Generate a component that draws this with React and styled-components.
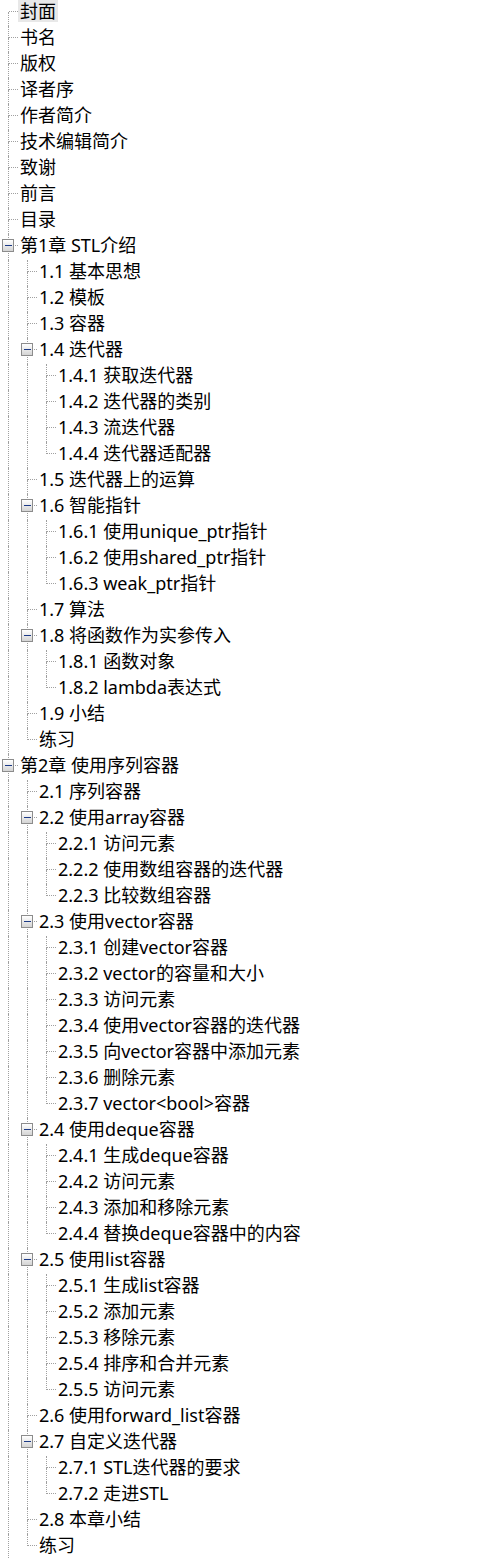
import React from 'react';
import styled, { createGlobalStyle } from 'styled-components';

const GlobalStyle = createGlobalStyle`
  html, body {
    margin: 0;
    padding: 0;
    background: #ffffff;
  }
  body {
    font-family: "Noto Sans", "Noto Sans CJK SC", sans-serif;
    color: #000000;
  }
`;

const LINE = '1px dotted #a0a0a0';

const Tree = styled.div`
  display: flex;
  flex-direction: column;
`;

const Row = styled.div`
  display: flex;
  align-items: flex-start;
  height: 26px;
`;

// vertical line of an ancestor level that still has siblings below
const Guide = styled.div`
  flex: none;
  width: 9px;
  height: 26px;
  margin-right: 10px;
  box-sizing: border-box;
  border-right: ${p => (p.$on ? LINE : 'none')};
`;

const Connector = styled.div`
  flex: none;
  width: 18px;
  height: 26px;
  display: grid;
  grid-template-columns: 2px 7px 5px 4px;
  grid-template-rows: 5px 7px 6px 8px;
`;

const StemTop = styled.div`
  grid-column: 1 / 3;
  grid-row: 1 / 3;
  border-right: ${p => (p.$on ? LINE : 'none')};
`;

const StemBottom = styled.div`
  grid-column: 1 / 3;
  grid-row: 3 / 5;
  border-right: ${p => (p.$on ? LINE : 'none')};
`;

const Branch = styled.div`
  grid-column: 3 / 5;
  grid-row: 1 / 3;
  border-bottom: ${LINE};
`;

const Toggle = styled.div`
  grid-column: 2 / 4;
  grid-row: 2 / 4;
  box-sizing: border-box;
  border: 1px solid #8c8c8c;
  background: linear-gradient(#ffffff, #d4d4d4);
  display: flex;
  align-items: center;
  justify-content: center;

  &::after {
    content: '';
    width: 7px;
    height: 1px;
    background: #1c3a86;
  }
`;

const Label = styled.div`
  height: 22px;
  line-height: 22px;
  padding: 0 2px;
  font-size: 18px;
  white-space: nowrap;
  background: ${p => (p.$selected ? '#e8e8e8' : 'transparent')};
`;

const toc = [
  { t: '封面', sel: true },
  { t: '书名' },
  { t: '版权' },
  { t: '译者序' },
  { t: '作者简介' },
  { t: '技术编辑简介' },
  { t: '致谢' },
  { t: '前言' },
  { t: '目录' },
  {
    t: '第1章 STL介绍',
    c: [
      { t: '1.1 基本思想' },
      { t: '1.2 模板' },
      { t: '1.3 容器' },
      {
        t: '1.4 迭代器',
        c: [
          { t: '1.4.1 获取迭代器' },
          { t: '1.4.2 迭代器的类别' },
          { t: '1.4.3 流迭代器' },
          { t: '1.4.4 迭代器适配器' },
        ],
      },
      { t: '1.5 迭代器上的运算' },
      {
        t: '1.6 智能指针',
        c: [
          { t: '1.6.1 使用unique_ptr指针' },
          { t: '1.6.2 使用shared_ptr指针' },
          { t: '1.6.3 weak_ptr指针' },
        ],
      },
      { t: '1.7 算法' },
      {
        t: '1.8 将函数作为实参传入',
        c: [{ t: '1.8.1 函数对象' }, { t: '1.8.2 lambda表达式' }],
      },
      { t: '1.9 小结' },
      { t: '练习' },
    ],
  },
  {
    t: '第2章 使用序列容器',
    c: [
      { t: '2.1 序列容器' },
      {
        t: '2.2 使用array容器',
        c: [
          { t: '2.2.1 访问元素' },
          { t: '2.2.2 使用数组容器的迭代器' },
          { t: '2.2.3 比较数组容器' },
        ],
      },
      {
        t: '2.3 使用vector容器',
        c: [
          { t: '2.3.1 创建vector容器' },
          { t: '2.3.2 vector的容量和大小' },
          { t: '2.3.3 访问元素' },
          { t: '2.3.4 使用vector容器的迭代器' },
          { t: '2.3.5 向vector容器中添加元素' },
          { t: '2.3.6 删除元素' },
          { t: '2.3.7 vector<bool>容器' },
        ],
      },
      {
        t: '2.4 使用deque容器',
        c: [
          { t: '2.4.1 生成deque容器' },
          { t: '2.4.2 访问元素' },
          { t: '2.4.3 添加和移除元素' },
          { t: '2.4.4 替换deque容器中的内容' },
        ],
      },
      {
        t: '2.5 使用list容器',
        c: [
          { t: '2.5.1 生成list容器' },
          { t: '2.5.2 添加元素' },
          { t: '2.5.3 移除元素' },
          { t: '2.5.4 排序和合并元素' },
          { t: '2.5.5 访问元素' },
        ],
      },
      { t: '2.6 使用forward_list容器' },
      {
        t: '2.7 自定义迭代器',
        c: [{ t: '2.7.1 STL迭代器的要求' }, { t: '2.7.2 走进STL' }],
      },
      { t: '2.8 本章小结' },
      { t: '练习' },
    ],
  },
];

// flatten the tree into rows, remembering which ancestor lines continue
function flatten(nodes, guides = [], depth = 0, out = []) {
  nodes.forEach((node, i) => {
    // the top level runs on past the bottom of the window
    const last = depth > 0 && i === nodes.length - 1;
    const first = depth === 0 && i === 0;
    out.push({ ...node, guides, last, first, key: out.length });
    if (node.c) flatten(node.c, [...guides, !last], depth + 1, out);
  });
  return out;
}

const rows = flatten(toc);

export default function App() {
  return (
    <>
      <GlobalStyle />
      <Tree>
        {rows.map(r => (
          <Row key={r.key}>
            {r.guides.map((on, i) => (
              <Guide key={i} $on={on} />
            ))}
            <Connector>
              <StemTop $on={!r.first} />
              <StemBottom $on={!r.last} />
              <Branch />
              {r.c && <Toggle />}
            </Connector>
            <Label $selected={r.sel}>{r.t}</Label>
          </Row>
        ))}
      </Tree>
    </>
  );
}
